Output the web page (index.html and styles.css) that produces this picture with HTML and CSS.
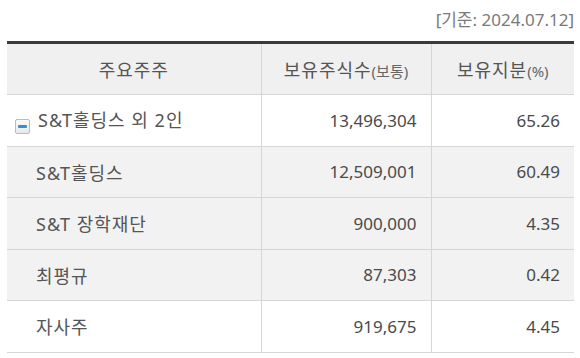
FILE: index.html
```html
<!DOCTYPE html>
<html lang="ko">
<head>
  <meta charset="UTF-8">
  <title>주요주주</title>
  <link rel="stylesheet" href="styles.css">
</head>
<body>

<div class="wrap">
  <div class="base-date">[기준: 2024.07.12]</div>

  <table class="holders">
    <colgroup>
      <col class="c-name">
      <col class="c-qty">
      <col class="c-rate">
    </colgroup>
    <thead>
      <tr>
        <th>주요주주</th>
        <th>보유주식수<small>(보통)</small></th>
        <th>보유지분<small>(%)</small></th>
      </tr>
    </thead>
    <tbody>
      <tr class="group">
        <td class="name">
          <span class="toggle"><span class="bar"></span></span>S&amp;T홀딩스 외 2인
        </td>
        <td class="num">13,496,304</td>
        <td class="num">65.26</td>
      </tr>
      <tr class="sub">
        <td class="name">S&amp;T홀딩스</td>
        <td class="num">12,509,001</td>
        <td class="num">60.49</td>
      </tr>
      <tr class="sub">
        <td class="name">S&amp;T 장학재단</td>
        <td class="num">900,000</td>
        <td class="num">4.35</td>
      </tr>
      <tr class="sub">
        <td class="name">최평규</td>
        <td class="num">87,303</td>
        <td class="num">0.42</td>
      </tr>
      <tr>
        <td class="name">자사주</td>
        <td class="num">919,675</td>
        <td class="num">4.45</td>
      </tr>
    </tbody>
  </table>
</div>

</body>
</html>
```

FILE: styles.css
```css
html, body {
  margin: 0;
  padding: 0;
  background: #fff;
  font-family: "Noto Sans", "Noto Sans CJK KR", sans-serif;
  color: #555;
}

.wrap {
  padding: 6px 6px 0 7px;
}

.base-date {
  text-align: right;
  font-size: 17px;
  line-height: 28px;
  color: #7a7a7a;
  height: 35px;
}

.holders {
  width: 567px;
  border-collapse: collapse;
  border-top: 3px solid #3a3a3a;
  table-layout: fixed;
}

.c-name { width: 254px; }
.c-qty { width: 170px; }

.holders th {
  height: 50px;
  padding: 0;
  background: #f0f0f0;
  font-weight: normal;
  font-size: 18px;
  letter-spacing: 1px;
  color: #555;
  border-bottom: 1px solid #d6d6d6;
  border-left: 1px solid #d6d6d6;
}

.holders th small {
  font-size: 15px;
  letter-spacing: 0;
  color: #666;
}

.holders th:first-child,
.holders td:first-child {
  border-left: none;
}

.holders td {
  height: 50.5px;
  padding: 0;
  font-size: 17px;
  color: #4a4a4a;
  border-bottom: 1px solid #d6d6d6;
  border-left: 1px solid #d6d6d6;
}

.holders tr.sub td {
  background: #f2f2f2;
}

.holders td.name {
  padding-left: 29px;
  font-size: 18px;
  letter-spacing: 1px;
  color: #555;
}

.holders tr.group td.name {
  padding-left: 8px;
}

.holders td.num {
  text-align: right;
  padding-right: 14px;
}

.toggle {
  display: inline-flex;
  align-items: center;
  justify-content: center;
  width: 13px;
  height: 13px;
  border: 1px solid #bcbcbc;
  border-radius: 2px;
  background: linear-gradient(#fafafa, #e8e8e8);
  margin-right: 8px;
  vertical-align: -1px;
}

.toggle .bar {
  width: 9px;
  height: 3px;
  border-radius: 1px;
  background: #3b8ad3;
}
```
